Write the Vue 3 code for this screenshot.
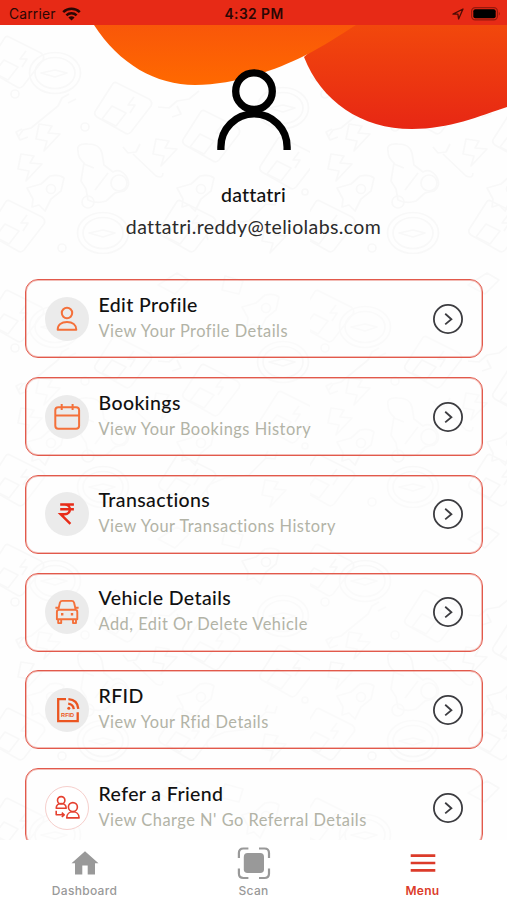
<script setup>

import { ref } from 'vue'

const usuario = ref({
  nome: 'dattatri',
  email: 'dattatri.reddy@teliolabs.com'
})

const itens = ref([
  { id: 1, icone: 'pessoa', titulo: 'Edit Profile', texto: 'View Your Profile Details' },
  { id: 2, icone: 'agenda', titulo: 'Bookings', texto: 'View Your Bookings History' },
  { id: 3, icone: 'rupia', titulo: 'Transactions', texto: 'View Your Transactions History' },
  { id: 4, icone: 'carro', titulo: 'Vehicle Details', texto: 'Add, Edit Or Delete Vehicle' },
  { id: 5, icone: 'rfid', titulo: 'RFID', texto: 'View Your Rfid Details' },
  { id: 6, icone: 'amigo', titulo: 'Refer a Friend', texto: "View Charge N' Go Referral Details" }
])

const abas = ref(['Dashboard', 'Scan', 'Menu'])
const abaAtiva = ref('Menu')
</script>

<template>
  <div class="app">
    <header class="status">
      <div class="operadora">
        <span>Carrier</span>
        <svg width="19" height="14" viewBox="0 0 19 14" fill="none" stroke="#2a0704" stroke-width="2.5">
          <path d="M1.2 5.2a11.8 11.8 0 0 1 16.6 0" />
          <path d="M4.4 8.4a7.2 7.2 0 0 1 10.2 0" />
          <path d="M9.5 13.6L6.4 10.5a4.4 4.4 0 0 1 6.2 0z" fill="#2a0704" stroke="none" />
        </svg>
      </div>
      <span class="hora">4:32 PM</span>
      <div class="bateria">
        <svg width="12" height="12" viewBox="0 0 12 12" fill="none" stroke="#4d0c05" stroke-width="1.3" stroke-linejoin="round">
          <path d="M1 6.2L11 1L6.6 11L5.9 6.2z" />
        </svg>
        <svg width="30" height="14" viewBox="0 0 30 14">
          <rect x="0.6" y="0.6" width="25.8" height="12.3" rx="3.6" fill="none" stroke="#98190d" stroke-width="1.2" />
          <rect x="2.3" y="2.3" width="22.4" height="9" rx="2" fill="#000" />
          <path d="M27.8 4.8q2 2 0 4z" fill="#98190d" />
        </svg>
      </div>
    </header>

    <main class="conteudo">
      <svg class="fundo" width="507" height="815" viewBox="0 25 507 815">
        <defs>
          <linearGradient id="laranja" x1="0" y1="0" x2="0" y2="1">
            <stop offset="0" stop-color="#f95709" />
            <stop offset="1" stop-color="#ff6900" />
          </linearGradient>
          <linearGradient id="vermelho" x1="0" y1="0" x2="0" y2="1">
            <stop offset="0" stop-color="#f2480c" />
            <stop offset="1" stop-color="#e72714" />
          </linearGradient>
          <pattern id="desenhos" width="310" height="254" patternUnits="userSpaceOnUse">
            <g fill="none" stroke="#f8f8f8" stroke-width="1.7" stroke-linejoin="round">
              <g id="medidor">
                <ellipse cx="55" cy="73" rx="25.5" ry="20.5" />
                <ellipse cx="55" cy="73" rx="20" ry="15.5" />
                <path d="M41 73l14-3 12 3-12 4z" />
              </g>
              <use href="#medidor" x="48" y="160" />
              <use href="#medidor" x="228" y="35" />
              <g id="bomba">
                <path d="M117 83l32 16q4 3 2 7l-20 26q-3 3-6 1l-28-16q-4-3-1-7l16-25q2-4 5-2z" />
                <path d="M112 106l14 7-10 13-14-7zM134 97l-6 8h7l-5 8" />
              </g>
              <use href="#bomba" x="88" y="28" />
              <use href="#bomba" x="-108" y="-46" />
              <use href="#bomba" x="-107" y="118" />
              <use href="#bomba" x="165" y="55" />
              <use href="#bomba" x="64" y="118" />
              <path d="M18 137l5-7 8-2 27-22 4-8 7-4m-1 9l8-4M22 129l-6 3 4 8 8-3" />
              <path d="M158 107l11 1 8-7 12-2 10-8m-22 15l4 8-9 3" />
              <path d="M123 147l5 6 8-1 4-8m-7 10l23 22q7 3 7-3" />
              <g id="raio">
                <path d="M39 124l13 2-4 7 12 1-16 17 3-10-11-2z" />
              </g>
              <use href="#raio" x="117" y="15" />
              <use href="#raio" x="226" y="102" />
              <use href="#raio" x="-18" y="30" />
              <path d="M78 151q-2-8 10-7 12 0 14 9l2 12 9 7q7-4 13 4 6 9-2 15l-9 2-9 8q-10 3-18-1l-2-11-5-8 3-18q-6-5-6-12zM84 164l10 4m14 5l-13 17" />
              <circle cx="119" cy="183" r="8" />
              <circle cx="88" cy="202" r="6" />
              <g id="foguete">
                <path d="M27 188l14-4 9-8q9-2 14 2l-3 13-10 8-6 12-6-6-7 2 1-8z" />
                <circle cx="51" cy="189" r="4.5" />
              </g>
              <use href="#foguete" x="150" y="0" />
              <use href="#foguete" x="215" y="-135" />
              <path d="M208 240q-4-8 5-11l12-5 24-3 17-17 9 1 2-7m-9-1l-3 6" />
              <circle cx="85" cy="127" r="4" />
              <circle cx="15" cy="94" r="4" />
              <circle cx="305" cy="192" r="3" />
              <circle cx="62" cy="248" r="4" />
              <path d="M158 31l19-12 12 7-14 14zM225 22l18 5-4 13-17-4z" />
            </g>
          </pattern>
        </defs>
        <rect y="25" width="507" height="815" fill="#fefefe" />
        <rect y="25" width="507" height="815" fill="url(#desenhos)" />
        <path d="M304 57C321 101 361 129 412 129C449 129 480 116 507 107V25H340z" fill="url(#vermelho)" />
        <path d="M94 25C119 64 156 85 195 85C235 85 278 69 304 56C324 46 340 35 356 25z" fill="url(#laranja)" />
      </svg>

      <section class="perfil">
        <svg class="avatar" width="74" height="82" viewBox="0 0 74 82" fill="none" stroke="#000" stroke-width="7.3">
          <circle cx="37" cy="22.2" r="18.3" />
          <path d="M3.9 81V78A33.1 33.1 0 0 1 70.1 78V81" />
        </svg>
        <p class="nome">{{ usuario.nome }}</p>
        <p class="email">{{ usuario.email }}</p>
      </section>

      <section class="lista">
        <div v-for="item in itens" :key="item.id" class="cartao">
          <div class="icone" :class="item.icone">
            <svg v-if="item.icone == 'pessoa'" width="28" height="28" viewBox="0 0 28 28" fill="none" stroke="#f4703a" stroke-width="2">
              <circle cx="14" cy="8" r="5.2" />
              <path d="M4.7 24.8C4.7 20 8.5 17 14 17s9.3 3 9.3 7.8z" stroke-linejoin="round" />
            </svg>
            <svg v-else-if="item.icone == 'agenda'" width="28" height="28" viewBox="0 0 28 28" fill="none" stroke="#f4703a" stroke-width="2">
              <rect x="2.3" y="4.2" width="23.8" height="21.6" rx="3" />
              <path d="M2.3 12.6h23.8M8.7 1v6M19.6 1v6" />
            </svg>
            <svg v-else-if="item.icone == 'rupia'" width="28" height="28" viewBox="0 0 28 28" fill="none" stroke="#e82c19" stroke-width="2.4">
              <path d="M7.2 4.5h13.7M7.2 9.3h13.7M7.2 4.5h4.5c7 0 7 9.7 0 9.7H7.6l9.8 9.6" />
            </svg>
            <svg v-else-if="item.icone == 'carro'" width="28" height="28" viewBox="0 0 28 28" fill="none" stroke="#f4703a" stroke-width="1.9" stroke-linejoin="round">
              <path d="M5.3 11.7l1.6-7q.6-1.8 2.4-1.8h9.4q1.8 0 2.4 1.8l1.6 7M3.9 21.2v-7.3q0-2.2 2.2-2.2h16q2.2 0 2.2 2.2v7.3zM5.2 21.2v3.9h3v-3.9M20 21.2v3.9h3v-3.9M2.4 9.8h2.8M22.8 9.8h2.8" />
              <path d="M8 16.2h2.4M17.8 16.2h2.4" stroke-width="2.4" />
            </svg>
            <svg v-else-if="item.icone == 'rfid'" width="28" height="28" viewBox="0 0 28 28" fill="none" stroke="#eb5520" stroke-width="2.3">
              <path d="M13 3.2H5.2v22h19.5v-9" />
              <path d="M15.4 3.2q9.3.6 9.9 9.7M15.2 7.7q4.9.5 5.6 5.5" />
              <circle cx="15.8" cy="12.2" r="1.5" fill="#eb5520" stroke="none" />
              <text x="8.1" y="21" class="sigla">RFID</text>
            </svg>
            <svg v-else width="28" height="28" viewBox="0 0 28 28" fill="none" stroke="#e5402f" stroke-width="1.6" stroke-linejoin="round">
              <circle cx="8.2" cy="6.3" r="3.7" />
              <path d="M3.2 14.2c0-6.3 10-6.3 10 0z" />
              <circle cx="19.9" cy="13.1" r="4.5" />
              <path d="M13.7 23.9c0-8.2 12.4-8.2 12.4 0z" />
              <path d="M3.2 16.7v4.1h7M8.8 18.6l2.4 2.2-2.4 2.2" />
            </svg>
          </div>
          <div class="textos">
            <p class="titulo">{{ item.titulo }}</p>
            <p class="texto">{{ item.texto }}</p>
          </div>
          <svg class="seta" width="32" height="32" viewBox="0 0 32 32" fill="none" stroke="#3c3c40" stroke-width="1.8">
            <circle cx="16" cy="16" r="14.1" />
            <path d="M13.2 10.8l6.2 5.4-6.2 5.2" />
          </svg>
        </div>
      </section>
    </main>

    <nav class="abas">
      <button v-for="aba in abas" :key="aba" class="aba" :class="{ ativa: aba == abaAtiva }" @click="abaAtiva = aba">
        <svg v-if="aba == 'Dashboard'" width="34" height="34" viewBox="0 0 34 34" fill="currentColor">
          <path d="M17 5.3L30.5 17.2H27V28.6H19.7V19.5H14.3V28.6H7V17.2H3.5z" />
        </svg>
        <svg v-else-if="aba == 'Scan'" width="34" height="34" viewBox="0 0 34 34" fill="none" stroke="currentColor" stroke-width="2.2">
          <rect x="6.8" y="7.1" width="20.2" height="20" rx="3.8" fill="currentColor" stroke="none" />
          <path d="M1.9 12V7q0-4.5 4.5-4.5h5M22 2.5h5.5q4.5 0 4.5 4.5v5M32 22.5v5q0 4.5-4.5 4.5H22M11.4 32h-5q-4.5 0-4.5-4.5v-5" />
        </svg>
        <svg v-else width="34" height="34" viewBox="0 0 34 34" fill="none" stroke="currentColor" stroke-width="2.6">
          <path d="M4.7 9.6h24.6M4.7 17h24.6M4.7 24.4h24.6" />
        </svg>
        <span>{{ aba }}</span>
      </button>
    </nav>
  </div>
</template>

<style>
body {
  margin: 0;
  background: #fff;
}
</style>

<style scoped>
.app {
  display: flex;
  flex-direction: column;
  width: 507px;
  height: 900px;
  overflow: hidden;
  font-family: Lato, "Open Sans", sans-serif;
}

p {
  margin: 0;
  white-space: nowrap;
}

svg {
  display: block;
  flex: none;
}

.status {
  display: grid;
  grid-template-columns: 1fr auto 1fr;
  align-items: center;
  height: 25px;
  padding: 2px 6px 0 9px;
  box-sizing: border-box;
  flex: none;
  color: #2a0704;
  background-color: #e72a16;
  font-family: Inter, sans-serif;
  font-size: 13.8px;
}

.operadora {
  display: flex;
  align-items: center;
  gap: 6px;
  letter-spacing: 0.2px;
}

.hora {
  margin-right: 2px;
  font-weight: 600;
  letter-spacing: 0.45px;
}

.bateria {
  display: flex;
  align-items: center;
  justify-content: flex-end;
  gap: 7px;
}

.conteudo {
  position: relative;
  flex: 1;
  min-height: 0;
  overflow: hidden;
}

.fundo {
  position: absolute;
  top: 0;
  left: 0;
}

.perfil {
  position: relative;
  display: flex;
  flex-direction: column;
  align-items: center;
  height: 254.3px;
  padding-top: 44px;
  box-sizing: border-box;
}

.nome {
  margin-top: 29px;
  line-height: 30px;
  font-size: 19.5px;
  font-weight: 500;
  letter-spacing: 0.2px;
  color: #111;
}

.email {
  margin-top: 2px;
  line-height: 30px;
  font-size: 19.5px;
  letter-spacing: 0.38px;
  color: #2b2b2b;
}

.lista {
  position: relative;
  display: flex;
  flex-direction: column;
  gap: 18.75px;
  padding: 0 24.5px;
}

.cartao {
  display: flex;
  flex: none;
  height: 79px;
  padding: 0 19px;
  box-sizing: border-box;
  border: 1px solid #e2594b;
  border-radius: 13px;
  box-shadow: inset 0 0 0 1px rgba(226, 89, 75, 0.4);
  background-color: rgba(255, 255, 255, 0.3);
}

.icone {
  display: flex;
  align-items: center;
  justify-content: center;
  width: 44px;
  height: 44px;
  margin-top: 16.5px;
  border-radius: 50%;
  background-color: #ebebeb;
}

.amigo {
  box-sizing: border-box;
  border: 1px solid #f6cfcc;
  background-color: #fff;
}

.sigla {
  fill: #eb5520;
  stroke: none;
  font-family: "Liberation Sans", sans-serif;
  font-size: 5.6px;
  font-weight: bold;
}

.textos {
  flex: 1;
  padding: 11.5px 0 0 10px;
}

.titulo {
  line-height: 26px;
  font-size: 19.5px;
  font-weight: 500;
  letter-spacing: 0.4px;
  color: #111;
}

.texto {
  line-height: 25px;
  font-size: 16.4px;
  letter-spacing: 0.5px;
  color: #b2b3a6;
}

.seta {
  margin: 22.5px -1px 0 0;
}

.abas {
  display: grid;
  grid-template-columns: repeat(3, 1fr);
  height: 60px;
  flex: none;
  background-color: #fff;
}

.aba {
  display: flex;
  flex-direction: column;
  align-items: center;
  padding: 6px 0 0;
  border: none;
  background: none;
  color: #999;
  font-family: Inter, sans-serif;
  font-size: 12px;
  font-weight: 500;
  letter-spacing: 0.3px;
}

.aba span {
  margin-top: 3px;
  line-height: 16px;
}

.ativa {
  color: #dc3b2a;
  font-weight: 600;
}
</style>
